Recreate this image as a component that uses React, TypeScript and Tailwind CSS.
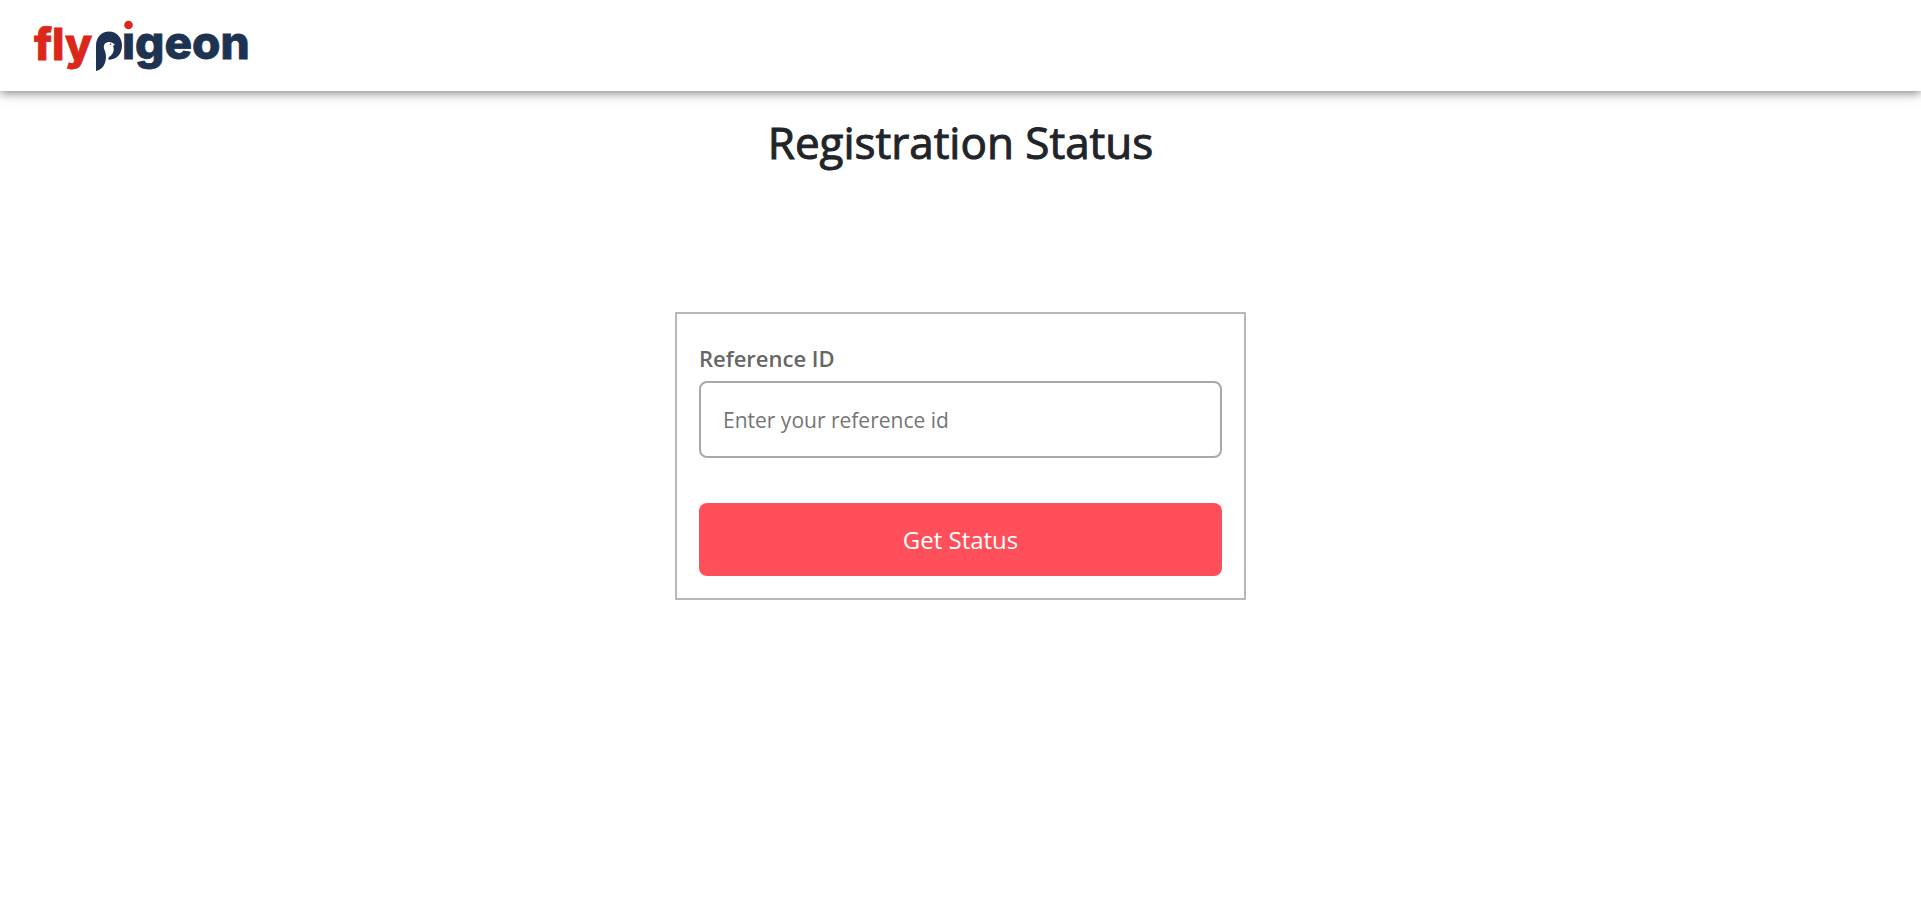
import { useState } from "react";

function Logo() {
  return (
    <a href="/" aria-label="flypigeon home" className="block">
      <svg width="230" height="91" viewBox="0 0 230 91" className="block" aria-hidden="true">
        <g fontFamily="Inter, Lato, sans-serif" fontWeight="800" strokeWidth="0.8">
          <text x="4" y="60" fontSize="44" fill="#db2719" stroke="#db2719">fly</text>
          <text x="92" y="59" fontSize="46" fill="#1e3252" stroke="#1e3252">ıgeon</text>
        </g>
        <circle cx="98.500" cy="25" r="4.300" fill="#db2719" />
        <path
          d="M66 71V46C66 37 71.500 31.500 79 31.500C86.500 31.500 92 37.500 92 45.500C92 53.500 87 59.500 79.500 59.700C77.500 59.500 78 57.500 80.500 56C84 53 84.500 48.500 82.800 45.800L85 45C82.500 41.500 77.500 41 75 43.500C73.500 45.500 73.500 47 74.500 50C77.500 56 76.500 69 66 71Z"
          fill="#1e3252"
        />
        <circle cx="80.500" cy="44.200" r="0.700" fill="#1e3252" />
      </svg>
    </a>
  );
}

export default function App() {
  const [reference, setReference] = useState("");

  return (
    <div className="min-h-screen bg-white font-['Open_Sans','Noto_Sans',sans-serif] text-[#212529]">
      <header className="flex h-[91px] items-center bg-white px-[30px] shadow-[0_2px_10px_rgba(0,0,0,0.5)]">
        <Logo />
      </header>
      <main className="flex flex-col items-center px-4">
        <h1 className="mt-[22px] text-center text-[44px] leading-[58px] font-medium [-webkit-text-stroke:1px_#212529]">
          Registration Status
        </h1>
        <form
          onSubmit={(event) => event.preventDefault()}
          className="mt-[141px] flex w-full max-w-[571px] flex-col border-2 border-[#b8b8b8] px-[22px] pt-[27px] pb-[22px]"
        >
          <label htmlFor="reference" className="text-[22px] leading-[34px] font-semibold text-[#666]">
            Reference ID
          </label>
          <input
            id="reference"
            type="text"
            value={reference}
            onChange={(event) => setReference(event.target.value)}
            placeholder="Enter your reference id"
            className="mt-[6px] h-[77px] w-full rounded-lg border-2 border-[#a9a9a9] px-[22px] text-[21px] placeholder:text-[#757575]"
          />
          <button
            type="submit"
            className="mt-[45px] h-[73px] w-full rounded-lg bg-[#ff4f5a] text-2xl text-white"
          >
            Get Status
          </button>
        </form>
      </main>
    </div>
  );
}
